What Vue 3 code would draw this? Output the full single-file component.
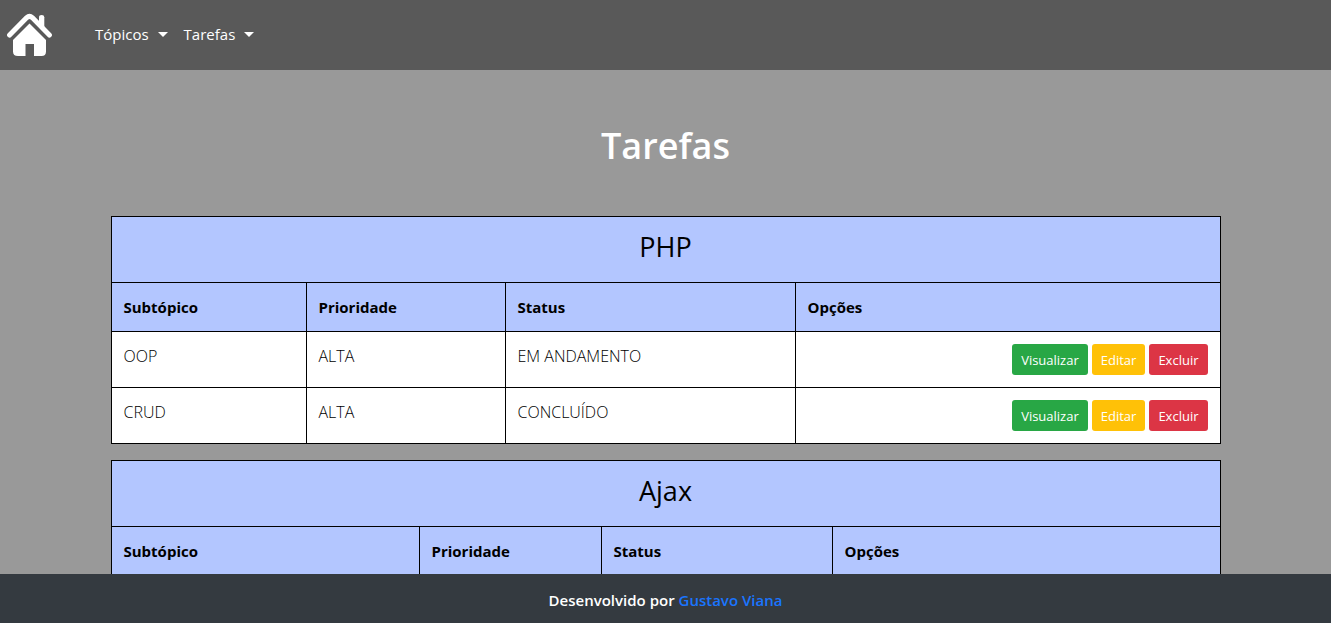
<script setup>
const menus = ['Tópicos', 'Tarefas']
const columns = ['Subtópico', 'Prioridade', 'Status', 'Opções']
const topics = [
  {
    name: 'PHP',
    widths: [195, 199, 290, 425],
    tasks: [
      { subtopic: 'OOP', priority: 'ALTA', status: 'EM ANDAMENTO' },
      { subtopic: 'CRUD', priority: 'ALTA', status: 'CONCLUÍDO' },
    ],
  },
  { name: 'Ajax', widths: [308, 182, 231, 388], tasks: [] },
]
const share = (width, widths) => `${(width / widths.reduce((a, b) => a + b, 0)) * 100}%`
</script>

<template>
  <div class="page">
    <header class="navbar">
      <a class="brand" href="#" aria-label="Início">
        <svg width="46" height="44" viewBox="0 0 46 44" fill="none" aria-hidden="true">
          <path d="M2.6 22 19.8 4.6Q22.5 2 25.2 4.6L42.4 22" stroke="#fff" stroke-width="5" stroke-linecap="round" stroke-linejoin="round" />
          <path d="M32 12V4.3Q32 2 34.7 2Q37.3 2 37.3 4.3V17Z" fill="#fff" />
          <path d="M22.5 10.5 39 27V38.5Q39 43 34.5 43H27V31H18.5V43H11Q6 43 6 38.5V27Z" fill="#fff" />
        </svg>
      </a>
      <nav class="menu">
        <button v-for="menu in menus" :key="menu" type="button" class="menu-item">
          {{ menu }}<span class="caret"></span>
        </button>
      </nav>
    </header>

    <main class="content">
      <div class="container">
        <h1>Tarefas</h1>
        <table v-for="topic in topics" :key="topic.name">
          <colgroup>
            <col v-for="(w, i) in topic.widths" :key="i" :style="{ width: share(w, topic.widths) }" />
          </colgroup>
          <thead>
            <tr>
              <th colspan="4" class="topic"><h3>{{ topic.name }}</h3></th>
            </tr>
            <tr>
              <th v-for="column in columns" :key="column" scope="col">{{ column }}</th>
            </tr>
          </thead>
          <tbody>
            <tr v-for="task in topic.tasks" :key="task.subtopic">
              <td>{{ task.subtopic }}</td>
              <td>{{ task.priority }}</td>
              <td>{{ task.status }}</td>
              <td>
                <div class="actions">
                  <button type="button" class="btn view">Visualizar</button>
                  <button type="button" class="btn edit">Editar</button>
                  <button type="button" class="btn delete">Excluir</button>
                </div>
              </td>
            </tr>
          </tbody>
        </table>
      </div>
    </main>

    <footer class="footer">Desenvolvido por <a href="#">Gustavo Viana</a></footer>
  </div>
</template>

<style>
body {
  margin: 0;
  background: #999;
}
</style>

<style scoped>
* {
  box-sizing: border-box;
}
.page {
  display: flex;
  flex-direction: column;
  height: 100vh;
  background: #999;
  color: #000;
  font-family: "Segoe UI", "Open Sans", "Noto Sans", sans-serif;
  font-size: 15px;
  line-height: 24px;
}
.navbar {
  display: flex;
  flex: none;
  align-items: center;
  gap: 34px;
  height: 70px;
  padding: 0 7px;
  background: #595959;
}
.brand,
.brand svg {
  display: block;
}
.menu {
  display: flex;
  padding-bottom: 2px;
}
.menu-item {
  display: flex;
  align-items: center;
  gap: 9px;
  padding: 8px;
  border: 0;
  background: none;
  color: #fff;
  font: inherit;
  cursor: pointer;
}
.caret {
  border: 5px solid transparent;
  border-top-color: #fff;
  border-bottom: 0;
}
.content {
  flex: 1;
  min-height: 0;
  overflow-y: auto;
  scrollbar-width: none;
}
.container {
  max-width: 1140px;
  margin: 0 auto;
  padding: 0 15px;
}
h1 {
  margin: 0;
  padding: 52px 0 46px;
  color: #fff;
  font-size: 36px;
  font-weight: 600;
  line-height: 48px;
  text-align: center;
}
table {
  width: 100%;
  margin-bottom: 16px;
  border-collapse: collapse;
  table-layout: fixed;
  background: #fff;
}
th,
td {
  padding: 12px;
  border: 1px solid #000;
  text-align: left;
  vertical-align: top;
}
td {
  font-size: 16px;
  font-weight: 300;
}
th {
  background: #b3c6ff;
  font-weight: 700;
}
h3 {
  margin: 0 0 6px;
  font-size: 27px;
  font-weight: 500;
  line-height: 35px;
  text-align: center;
}
.actions {
  display: flex;
  justify-content: flex-end;
  gap: 4px;
}
.btn {
  padding: 5px 8px 3px;
  border: 1px solid transparent;
  border-radius: 3px;
  color: #fff;
  font: inherit;
  font-size: 13px;
  font-weight: 400;
  line-height: 21px;
  cursor: pointer;
}
.view {
  background-color: #28a745;
}
.edit {
  background-color: #ffc107;
}
.delete {
  background-color: #dc3545;
}
.footer {
  flex: none;
  padding: 14px 12px 11px;
  background: #343a40;
  color: #fff;
  font-weight: 600;
  text-align: center;
}
.footer a {
  color: #1a75ff;
  text-decoration: none;
}
</style>
